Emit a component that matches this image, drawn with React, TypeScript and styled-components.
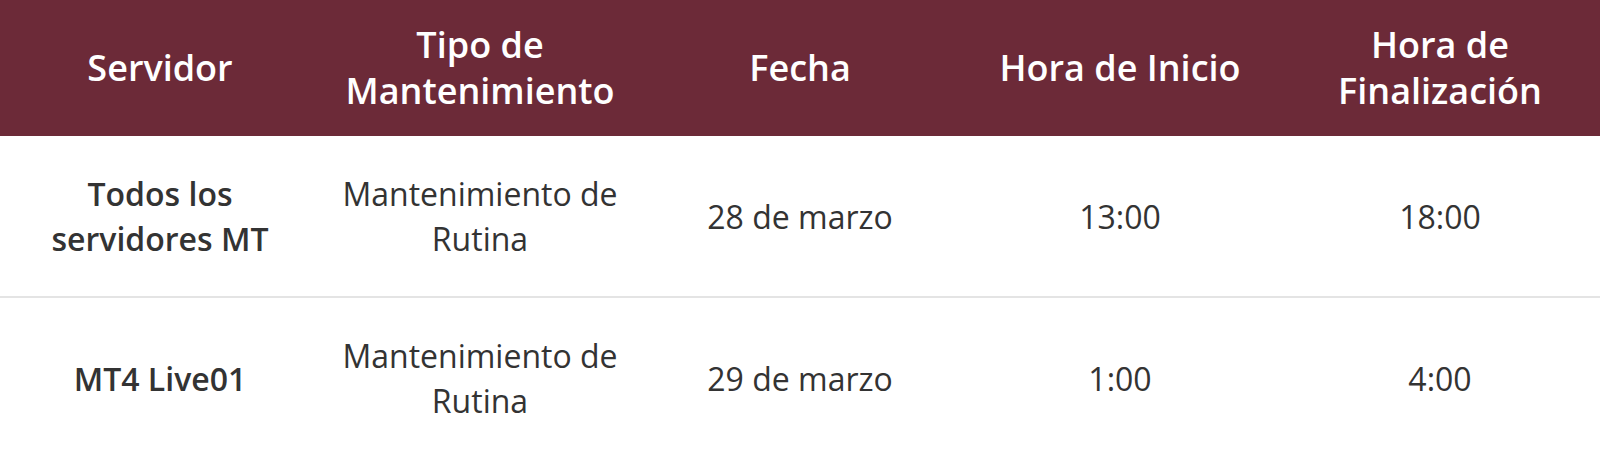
import React from 'react';
import styled, { createGlobalStyle } from 'styled-components';

const GlobalStyle = createGlobalStyle`
  html, body {
    margin: 0;
    padding: 0;
    background: #ffffff;
  }
  body {
    font-family: "Open Sans", "Liberation Sans", Arial, sans-serif;
    -webkit-font-smoothing: antialiased;
  }
`;

const Table = styled.div`
  width: 100%;
  display: flex;
  flex-direction: column;
`;

const Row = styled.div<{ $head?: boolean; $divider?: boolean }>`
  display: grid;
  grid-template-columns: repeat(5, 1fr);
  background: ${p => (p.$head ? '#6c2a38' : '#ffffff')};
  border-top: ${p => (p.$divider ? '2px solid #e4e4e4' : 'none')};
`;

const HeadCell = styled.div`
  display: flex;
  align-items: center;
  justify-content: center;
  text-align: center;
  padding: 22px 16px;
  color: #ffffff;
  font-size: 36px;
  font-weight: 600;
  line-height: 46px;
`;

const Cell = styled.div<{ $strong?: boolean }>`
  display: flex;
  align-items: center;
  justify-content: center;
  text-align: center;
  padding: 35px 16px;
  color: #333333;
  font-size: 32px;
  font-weight: ${p => (p.$strong ? 600 : 400)};
  line-height: 45px;
`;

const columns = [
  'Servidor',
  'Tipo de Mantenimiento',
  'Fecha',
  'Hora de Inicio',
  'Hora de Finalización',
];

const rows = [
  ['Todos los servidores MT', 'Mantenimiento de Rutina', '28 de marzo', '13:00', '18:00'],
  ['MT4 Live01', 'Mantenimiento de Rutina', '29 de marzo', '1:00', '4:00'],
];

export default function App() {
  return (
    <>
      <GlobalStyle />
      <Table>
        <Row $head>
          {columns.map(c => (
            <HeadCell key={c}>{c}</HeadCell>
          ))}
        </Row>
        {rows.map((r, i) => (
          <Row key={i} $divider={i > 0}>
            {r.map((v, j) => (
              <Cell key={j} $strong={j === 0}>
                {v}
              </Cell>
            ))}
          </Row>
        ))}
      </Table>
    </>
  );
}
